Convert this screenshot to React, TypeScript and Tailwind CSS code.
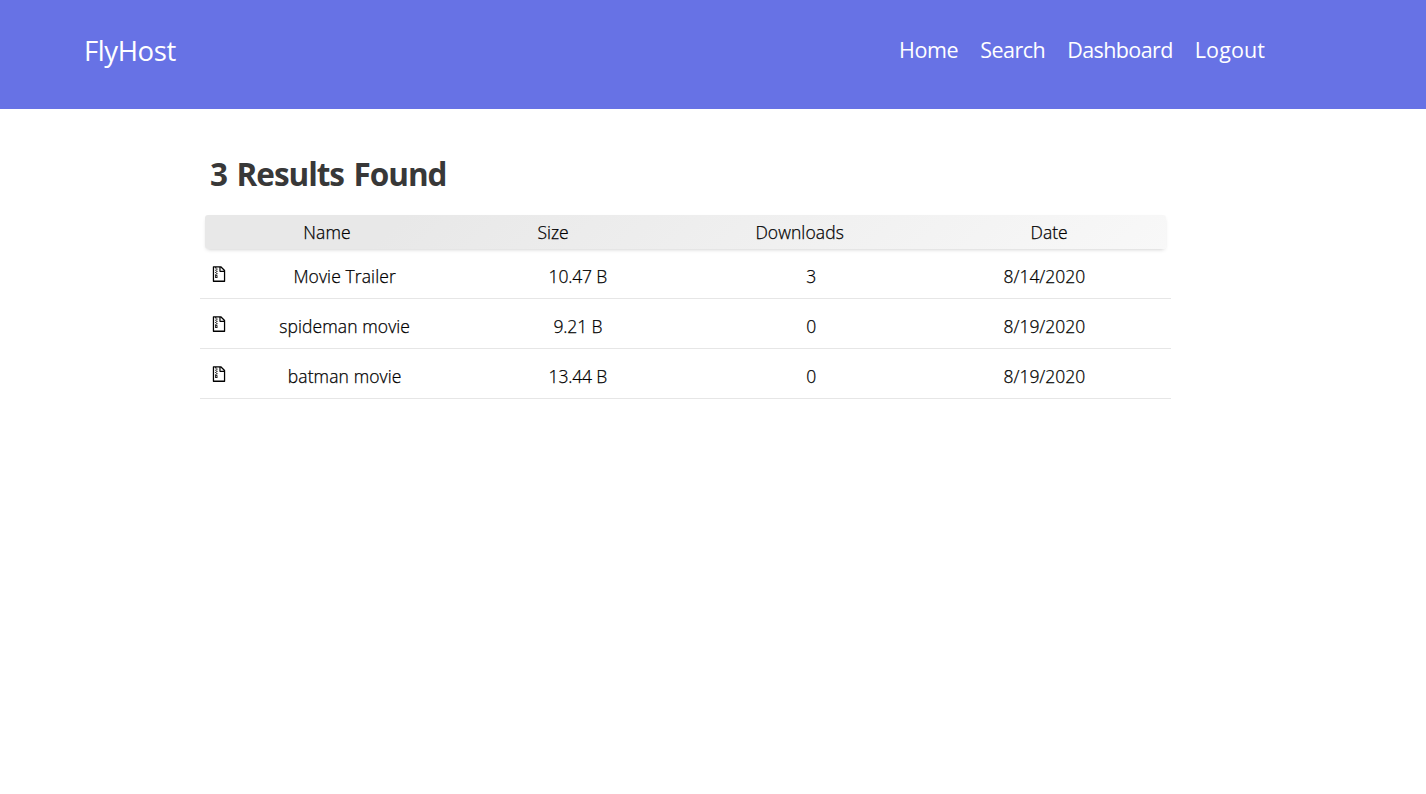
import { AiOutlineFileZip } from 'react-icons/ai';

const files = [
  { name: 'Movie Trailer', size: '10.47 B', downloads: 3, date: '8/14/2020' },
  { name: 'spideman movie', size: '9.21 B', downloads: 0, date: '8/19/2020' },
  { name: 'batman movie', size: '13.44 B', downloads: 0, date: '8/19/2020' },
];

function Navbar() {
  return (
    <header className="flex h-[109px] items-start justify-between bg-[#6772e5] pt-8 pr-[161px] pl-[84px] text-white">
      <a href="#" className="text-[27.5px] leading-[37px] tracking-[-0.4px]">FlyHost</a>
      <nav className="flex text-[21.5px] leading-[35px]">
        <a href="#" className="mr-[22px] tracking-[-0.4px]">Home</a>
        <a href="#" className="mr-[22px] tracking-[-0.5px]">Search</a>
        <a href="#" className="mr-[22px] tracking-[-0.6px]">Dashboard</a>
        <a href="#" className="tracking-[0.1px]">Logout</a>
      </nav>
    </header>
  );
}

export default function App() {
  return (
    <div className="min-h-screen bg-white font-['Open_Sans',sans-serif] text-black">
      <Navbar />
      <main className="ml-[200px] w-[971px] pt-[41px]">
        <h1 className="px-2.5 text-[31.5px] leading-[47px] font-bold tracking-[-1.05px] text-[#383838] [word-spacing:2.5px]">3 Results Found</h1>
        <div className="mx-[5px] mt-[18px] flex h-[34px] items-center justify-around rounded-[3px] bg-linear-[135deg,#e8e8e8_20%,#f8f8f8] px-[5px] text-[17.5px] font-light shadow-[0_2px_4px_-2px_rgba(0,0,0,0.25)] [-webkit-text-stroke:0.25px_black]">
          <span className="tracking-[0.15px]">Name</span>
          <span>Size</span>
          <span className="tracking-[0.1px]">Downloads</span>
          <span>Date</span>
        </div>
        {files.map((file) => (
          <div key={file.name} className="flex h-[50px] border-b border-[#e6e6e6] px-2.5 pt-4 text-center text-[17.5px] leading-[22px] font-light">
            <AiOutlineFileZip className="size-[18px] shrink-0" />
            <div className="grid grow grid-cols-4 [-webkit-text-stroke:0.25px_black]">
              <span className="tracking-[0.1px]">{file.name}</span>
              <span className="tracking-[-0.15px]">{file.size}</span>
              <span>{file.downloads}</span>
              <span>{file.date}</span>
            </div>
          </div>
        ))}
      </main>
    </div>
  );
}
